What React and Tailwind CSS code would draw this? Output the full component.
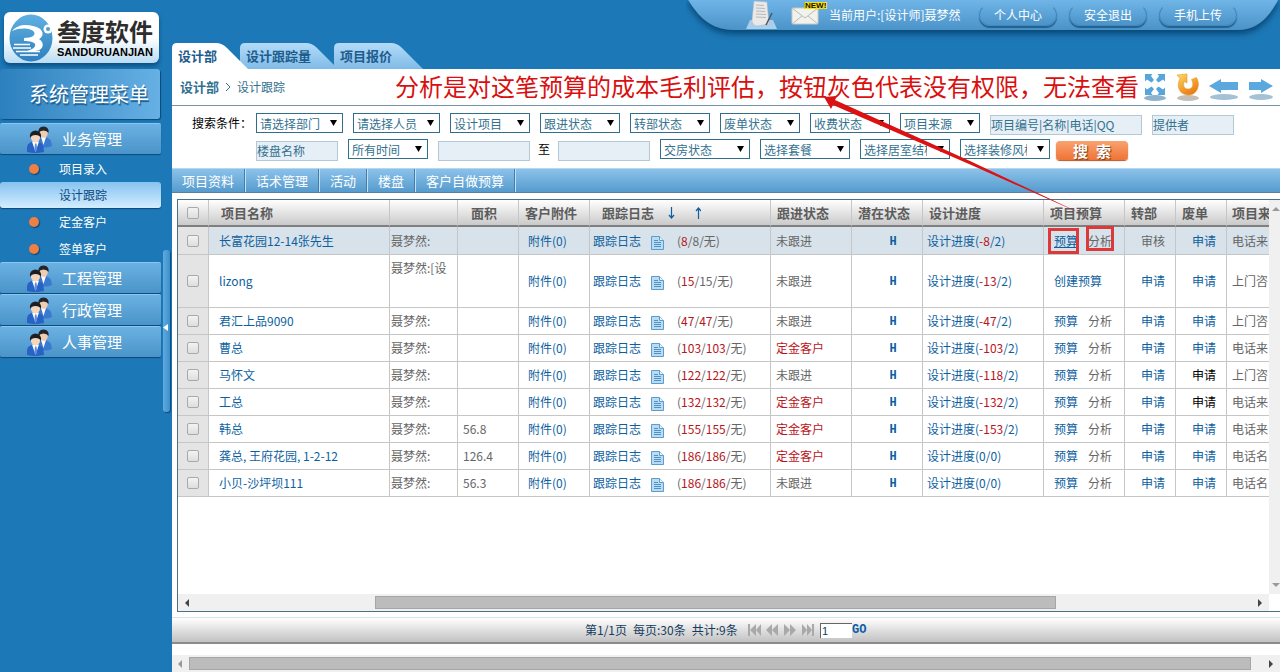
import React, { useState } from "react";

const projetos = [
  { nome: "长富花园12-14张先生", resp: "聂梦然:", area: "", log: ["8", "8"], status: "未跟进", prog: ["-8", "2"], origem: "电话来", atual: true, revisao: true },
  { nome: "lizong", resp: "聂梦然:[设", area: "", log: ["15", "15"], status: "未跟进", prog: ["-13", "2"], origem: "上门咨", novo: true },
  { nome: "君汇上品9090", resp: "聂梦然:", area: "", log: ["47", "47"], logRed: true, status: "未跟进", prog: ["-47", "2"], origem: "上门咨" },
  { nome: "曹总", resp: "聂梦然:", area: "", log: ["103", "103"], logRed: true, status: "定金客户", prog: ["-103", "2"], origem: "电话来" },
  { nome: "马怀文", resp: "聂梦然:", area: "", log: ["122", "122"], logRed: true, status: "未跟进", prog: ["-118", "2"], origem: "上门咨", preto: true },
  { nome: "工总", resp: "聂梦然:", area: "", log: ["132", "132"], logRed: true, status: "定金客户", prog: ["-132", "2"], origem: "电话来", preto: true },
  { nome: "韩总", resp: "聂梦然:", area: "56.8", log: ["155", "155"], logRed: true, status: "定金客户", prog: ["-153", "2"], origem: "电话来" },
  { nome: "龚总, 王府花园, 1-2-12", resp: "聂梦然:", area: "126.4", log: ["186", "186"], logRed: true, status: "定金客户", prog: ["0", "0"], origem: "电话名" },
  { nome: "小贝-沙坪坝111", resp: "聂梦然:", area: "56.3", log: ["186", "186"], logRed: true, status: "未跟进", prog: ["0", "0"], origem: "电话名" },
];

function Logo() {
  return (
    <a
      href="#home"
      className="ml-1 mt-3 flex h-[51px] w-[155px] items-center rounded-md bg-linear-to-b from-white from-50% to-[#b9dcf3] shadow-[0_3px_4px_#0d4f80]"
    >
      <svg className="ml-1 h-[48px] w-[48px] shrink-0" viewBox="0 0 48 48">
        <defs>
          <linearGradient id="globe" x1="0" y1="0" x2="0" y2="1">
            <stop offset="0" stopColor="#5fb0e2" />
            <stop offset="1" stopColor="#2f80bd" />
          </linearGradient>
        </defs>
        <ellipse cx="23" cy="24" rx="21.500" ry="23.500" fill="url(#globe)" />
        <path d="M4 17C9 11 17 10 25 12C36 14 37 22 31 25C37 28 36 37 27 37H19C25 35 28 33 27 30C26 28 22 27 16 27V24C24 24 28 21 26 18C24 14 12 13 4 17Z" fill="#fff" />
        <circle cx="40" cy="15" r="4.500" fill="#fff" />
        <circle cx="40" cy="15" r="2" fill="#4c9fd5" />
        <path d="M6 30.500h16M5 34h18M8 37.500h24M12 41h18" stroke="#fff" strokeWidth="1.300" fill="none" />
      </svg>
      <span className="ml-px flex flex-col gap-px">
        <span className="text-2xl/7 font-bold text-[#2d2d2d]">叁度软件</span>
        <span className="font-['Liberation_Sans',sans-serif] text-[11px]/3 font-bold text-black">SANDURUANJIAN</span>
      </span>
    </a>
  );
}

function UsersIcon() {
  return (
    <svg className="h-[27px] w-[27px]" viewBox="0 0 27 27" aria-hidden="true">
      <path d="M11 20V15Q12 11 17 11Q23 11 25 15L26 20Q20 23 11 20Z" fill="#3b78d0" />
      <path d="M15 11L17.500 19L20 11Z" fill="#fff" />
      <ellipse cx="17.500" cy="7" rx="4.300" ry="5" fill="#f0cdb0" />
      <path d="M12.500 7Q11.500 1 17.500 0.500Q23.500 1 22.500 7Q21 4.500 17.500 4.500Q14 4.500 12.500 7Z" fill="#22252b" />
      <path d="M1 26V21Q2 15.500 9 15.500Q16 15.500 17.500 21L18 26Q9 28 1 26Z" fill="#2763c4" />
      <path d="M6 15.500L9.500 26L13 15.500Z" fill="#fff" />
      <path d="M9 17.500h1.500l.7 6-1.500 2-1.300-2Z" fill="#5a8de0" />
      <ellipse cx="9.500" cy="11.500" rx="4.500" ry="5" fill="#f5d6bd" />
      <path d="M4 12Q3 5 9.500 4.500Q16 5 15 12Q13.500 9 9.500 9Q5.500 9 4 12Z" fill="#1c1f24" />
    </svg>
  );
}

function MenuGroup({ label }) {
  return (
    <button className="mb-px flex h-[31px] w-full items-center rounded-[2px] border-t border-[#8ac6ee] bg-linear-to-b from-[#6bb1e3] to-[#4a94c9] pl-[26px] text-white shadow-[0_1px_1px_#0b4a7a]">
      <UsersIcon />
      <span className="ml-[9px] text-[15px]/5">{label}</span>
    </button>
  );
}

function MenuItem({ label }) {
  return (
    <a href="#item" className="flex h-[27px] items-center pl-[29px] text-xs text-white">
      <span className="mr-5 h-[10px] w-[10px] rounded-full bg-[#ee7f45] shadow-[1px_1px_1px_#0c4672]" />
      {label}
    </a>
  );
}

function Sidebar() {
  return (
    <aside className="flex w-[172px] shrink-0 gap-[2px]">
      <div className="w-[161px]">
        <Logo />
        <h1 className="mb-1 mt-[6px] mr-px flex h-[50px] items-center rounded-[3px] bg-linear-to-r from-[#2b80bd] to-[#66b0e4] pl-[29px] text-xl text-white shadow-[1px_1px_1px_#0b4a7a] text-shadow-[1px_2px_1px_#1a5a8c]">
          系统管理菜单
        </h1>
        <nav>
          <MenuGroup label="业务管理" />
          <MenuItem label="项目录入" />
          <a
            href="#design"
            className="flex h-[26px] items-center rounded-[3px] bg-linear-to-b from-[#86c3ef] to-[#d3edff] pl-[59px] text-xs text-[#0b4a80] shadow-[0_1px_1px_#0b4a7a]"
          >
            设计跟踪
          </a>
          <MenuItem label="定金客户" />
          <MenuItem label="签单客户" />
          <MenuGroup label="工程管理" />
          <MenuGroup label="行政管理" />
          <MenuGroup label="人事管理" />
        </nav>
      </div>
      <button
        aria-label="收起菜单"
        className="mt-[250px] flex h-[162px] w-[7px] items-center rounded-[3px] bg-linear-to-r from-[#5fabe0] to-[#3c8fca] shadow-[1px_1px_1px_#0b4a7a]"
      >
        <svg className="mb-2 h-[7px] w-[5px]" viewBox="0 0 5 7">
          <path d="M5 0V7L0 3.500Z" fill="#fff" />
        </svg>
      </button>
    </aside>
  );
}

function PillButton({ children }) {
  return (
    <button className="h-[22px] w-[78px] rounded-full border border-[#4289bd] border-t-[#6eaedc] bg-linear-to-b from-[#68b0e2] to-[#4b93c8] text-xs text-white shadow-[0_2px_1px_#22608f]">
      {children}
    </button>
  );
}

function UserBar() {
  return (
    <div className="relative ml-auto flex h-[43px] w-[594px] items-start">
      <svg className="absolute inset-0 h-[43px] w-full" viewBox="0 0 594 43" preserveAspectRatio="none">
        <defs>
          <linearGradient id="bar" x1="0" y1="0" x2="0" y2="1">
            <stop offset="0" stopColor="#72b7ea" />
            <stop offset="1" stopColor="#4b93c8" />
          </linearGradient>
          <filter id="barShadow" x="-5%" y="-20%" width="110%" height="170%">
            <feDropShadow dx="0" dy="4" stdDeviation="3" floodColor="#063a63" floodOpacity="0.800" />
          </filter>
        </defs>
        <path d="M1 -2C12 16 24 30 48 30H552C572 30 584 16 593 -2Z" fill="url(#bar)" filter="url(#barShadow)" />
      </svg>
      <div className="relative flex h-[30px] items-center pl-[60px] text-xs text-white">
        <svg className="h-[30px] w-[32px]" viewBox="0 0 32 30">
          <path d="M4 20H27L31 29H0Z" fill="#a9cfea" />
          <path d="M8 1L21 2L23 24L11 26Q6 25 6 20Z" fill="#e9e9e9" stroke="#b5b5b5" strokeWidth="0.500" />
          <path d="M10 5l8 .5M10 8l9 .5M10 11l9 .5M10 14l10 .5M10 17l10 .5" stroke="#b9b9b9" />
          <path d="M26 13L20 25" stroke="#4c5763" strokeWidth="1.500" />
        </svg>
        <svg className="ml-3 h-[30px] w-[40px]" viewBox="0 0 40 30">
          <rect x="2" y="8" width="26" height="16" rx="1" fill="#f1f1ee" stroke="#c9c9c4" />
          <path d="M2 8L15 18L28 8M2 24L12 16M28 24L18 16" fill="none" stroke="#bbbbb5" />
          <text x="15" y="8" fontFamily="Liberation Sans, sans-serif" fontSize="8" fontWeight="700" fill="#111" stroke="#ffe100" strokeWidth="2" paintOrder="stroke">NEW!</text>
        </svg>
        <span className="-ml-px w-[150px] whitespace-nowrap">当前用户:[设计师]聂梦然</span>
        <div className="flex gap-3">
          <PillButton>个人中心</PillButton>
          <PillButton>安全退出</PillButton>
          <PillButton>手机上传</PillButton>
        </div>
      </div>
    </div>
  );
}

function Tab({ label, width, active, className }) {
  return (
    <button className={`relative h-[26px] text-left text-[13px] font-bold text-[#1d5c8c] ${className}`}>
      <svg className="absolute inset-0 h-full w-full" viewBox={`0 0 ${width} 26`} preserveAspectRatio="none">
        <defs>
          <linearGradient id="tabFill" x1="0" y1="0" x2="0" y2="1">
            <stop offset="0" stopColor="#b4dbf8" />
            <stop offset="1" stopColor="#7fbbe8" />
          </linearGradient>
        </defs>
        <path
          d={`M0 26V5Q0 0 5 0H${width - 32}Q${width - 26} 0 ${width - 21} 5L${width} 26Z`}
          fill={active ? "#fff" : "url(#tabFill)"}
        />
      </svg>
      <span className="relative pl-[6px]">{label}</span>
    </button>
  );
}

function NavIcons() {
  return (
    <div className="ml-auto mr-[6px] flex items-center gap-[9px]">
      <button aria-label="全屏">
        <svg className="h-[28px] w-[24px]" viewBox="0 0 24 28">
          <ellipse cx="12" cy="25" rx="11" ry="3" fill="#8fb4c9" />
          <path d="M2 1H9.500L8 3L11 7L8.500 9.500L4 6.500L2 8.500ZM22 1V8.500L20 6.500L15.500 9.500L13 7L16 3L14.500 1ZM2 22V14.500L4 16.500L8.500 13.500L11 16L8 20L9.500 22ZM22 22H14.500L16 20L13 16L15.500 13.500L20 16.500L22 14.500Z" fill="#56a5dc" />
        </svg>
      </button>
      <button aria-label="刷新">
        <svg className="h-[28px] w-[24px]" viewBox="0 0 24 28">
          <defs>
            <linearGradient id="reload" x1="0" y1="0" x2="0.600" y2="1">
              <stop offset="0" stopColor="#fbdc62" />
              <stop offset="1" stopColor="#ec7a14" />
            </linearGradient>
          </defs>
          <ellipse cx="12" cy="25" rx="11" ry="3" fill="#c3bfb8" />
          <path d="M1 2L11 1V10L8.500 8.500C6.500 12 8 16 12 16C17 16 18 11 15.500 6.500L20.500 4.500C25 12 21 22 12.500 22C3 22 0 13 4 5.500Z" fill="url(#reload)" stroke="#e39a2c" strokeWidth="0.600" />
        </svg>
      </button>
      <button aria-label="后退">
        <svg className="h-[28px] w-[30px]" viewBox="0 0 30 28">
          <ellipse cx="15" cy="24" rx="14" ry="3" fill="#a4c2d6" />
          <path d="M0 13L12 6V9H29V17H12V20Z" fill="#5aa8dd" />
        </svg>
      </button>
      <button aria-label="前进">
        <svg className="h-[28px] w-[26px]" viewBox="0 0 26 28">
          <ellipse cx="13" cy="24" rx="12" ry="3" fill="#a4c2d6" />
          <path d="M25 13L13 6V9H1V17H13V20Z" fill="#5aa8dd" />
        </svg>
      </button>
    </div>
  );
}

function Select({ label, className }) {
  return (
    <span className={`relative h-5 ${className}`}>
      <select
        aria-label={label}
        className="block h-5 w-full appearance-none overflow-hidden border border-[#2f6f8c] bg-white pl-[3px] pr-[22px] pt-px text-xs/4 text-[#33718f]"
      >
        <option>{label}</option>
      </select>
      <svg className="pointer-events-none absolute right-[6px] top-[7px] h-[6px] w-[7px]" viewBox="0 0 7 6">
        <path d="M0 0H7L3.500 6Z" fill="#000" />
      </svg>
    </span>
  );
}

function TextBox({ label, value = "", className }) {
  return (
    <input
      type="text"
      aria-label={label}
      defaultValue={value}
      className={`mt-[2px] h-5 border border-[#b3cad6] bg-[#e6eff5] pb-[2px] text-xs text-[#33718f] ${className}`}
    />
  );
}

function Search() {
  return (
    <form className="flex h-[62px] items-start overflow-hidden pt-[7px] whitespace-nowrap text-xs" onSubmit={(e) => e.preventDefault()}>
      <span className="w-[84px] shrink-0 pl-5 text-xs/5 text-black">搜索条件：</span>
      <div className="flex flex-col gap-1">
        <div className="flex gap-[10px]">
          <Select label="请选择部门" className="w-[87px]" />
          <Select label="请选择人员" className="w-[87px]" />
          <Select label="设计项目" className="w-20" />
          <Select label="跟进状态" className="w-20" />
          <Select label="转部状态" className="w-20" />
          <Select label="废单状态" className="w-20" />
          <Select label="收费状态" className="w-20" />
          <Select label="项目来源" className="w-20" />
          <TextBox label="关键字" value="项目编号|名称|电话|QQ" className="w-[152px]" />
          <TextBox label="提供者" value="提供者" className="w-[82px]" />
        </div>
        <div className="flex gap-[10px]">
          <TextBox label="楼盘名称" value="楼盘名称" className="w-[82px]" />
          <Select label="所有时间" className="w-20" />
          <div className="flex gap-2">
            <TextBox label="开始时间" className="w-[92px]" />
            <span className="w-3 text-xs/5 text-black">至</span>
            <TextBox label="结束时间" className="w-[92px]" />
          </div>
          <Select label="交房状态" className="w-[90px]" />
          <Select label="选择套餐" className="w-[90px]" />
          <Select label="选择居室结构" className="w-[90px]" />
          <Select label="选择装修风格" className="w-[90px]" />
          <button className="-ml-1 mt-[2px] flex h-[19px] w-[72px] items-center justify-center gap-2 rounded bg-linear-to-b from-[#f9a26f] to-[#ee7434] text-[15px]/4 font-bold text-white shadow-[0_1px_1px_#b5572a] text-shadow-[1px_1px_1px_#7a3510]">
            <span>搜</span>
            <span>索</span>
          </button>
        </div>
      </div>
    </form>
  );
}

function Toolbar() {
  const itens = ["项目资料", "话术管理", "活动", "楼盘", "客户自做预算"];
  return (
    <div className="flex h-[25px] border-t border-b border-t-[#b5d7ef] border-b-[#5d7f99] bg-linear-to-b from-[#8bc2ea] to-[#559bcd]">
      {itens.map((item) => (
        <button key={item} className="border-r border-[#c4e0f3] pl-[10px] pr-[11px] text-[13px]/5 text-white shadow-[inset_-1px_0_0_#3f7eae]">
          {item}
        </button>
      ))}
    </div>
  );
}

function LogIcon() {
  return (
    <svg className="ml-[10px] mt-1 h-[14px] w-[13px]" viewBox="0 0 13 14" aria-hidden="true">
      <path d="M.5 .5H8.500L12.500 4.500V13.500H.5Z" fill="#b7dcf5" stroke="#5d9ccc" />
      <path d="M8.500 .5V4.500H12.500" fill="#e8f5fd" stroke="#5d9ccc" />
      <path d="M3 4.500h4M3 6.500h7M3 8.500h7M3 10.500h7" stroke="#5590bd" />
    </svg>
  );
}

function Th({ children, className = "pl-[6px]" }) {
  return (
    <th className={`h-[27px] overflow-hidden border-r border-b-2 border-r-[#c6c6c6] border-b-[#7f7f7f] p-0 text-left text-[13px]/5 font-bold text-[#5c5c5c] ${className}`}>
      {children}
    </th>
  );
}

function Td({ children, className = "" }) {
  return <td className={`overflow-hidden border-r border-b border-[#c6c6c6] p-0 ${className}`}>{children}</td>;
}

const linkCls = "text-[#0d5f9f]";

function Check({ label }) {
  return (
    <input
      type="checkbox"
      aria-label={label}
      className="mx-auto block h-3 w-3 appearance-none rounded-[2px] border border-[#a9a9a9] bg-linear-to-b from-[#f3f3f3] to-[#dedede]"
    />
  );
}

function ProjetoRow({ p }) {
  const red = "text-[#b8141b]";
  return (
    <tr className={`${p.novo ? "h-[53px]" : p.atual ? "h-[28px]" : "h-[27px]"} ${p.atual ? "bg-[#d7e2ea]" : "bg-white"}`}>
      <Td className="bg-[#e4e4e4]"><Check label={p.nome} /></Td>
      <Td className="pl-[10px]"><a href="#p" className={linkCls}>{p.nome}</a></Td>
      <Td className={`pl-px ${p.novo ? "pt-[5px] align-top" : ""}`}>{p.resp}</Td>
      <Td className="pl-[5px]">{p.area}</Td>
      <Td className="pl-[9px]"><a href="#f" className={linkCls}>附件(0)</a></Td>
      <Td className="pl-[3px]">
        <div className="flex items-center">
          <a href="#l" className={linkCls}>跟踪日志</a>
          <LogIcon />
          <span className="ml-[13px]">
            (<span className={red}>{p.log[0]}</span>/<span className={p.logRed ? red : ""}>{p.log[1]}</span>/无)
          </span>
        </div>
      </Td>
      <Td className={`pl-[5px] ${p.status === "定金客户" ? red : ""}`}>{p.status}</Td>
      <Td className="pl-3 text-center"><span className={`font-['Liberation_Mono',monospace] text-xs font-bold ${linkCls}`}>H</span></Td>
      <Td className="pl-1">
        <a href="#d" className={linkCls}>
          设计进度(<span className={p.prog[0] === "0" ? "" : red}>{p.prog[0]}</span>/{p.prog[1]})
        </a>
      </Td>
      <Td className="pl-[10px]">
        {p.novo ? (
          <a href="#b" className={linkCls}>创建预算</a>
        ) : (
          <div className="flex gap-[10px]">
            <a href="#b" className={`${linkCls} ${p.atual ? "underline" : ""}`}>预算</a>
            <span>分析</span>
          </div>
        )}
      </Td>
      <Td className="pl-4">{p.revisao ? "审核" : <a href="#t" className={linkCls}>申请</a>}</Td>
      <Td className="pl-4"><a href="#w" className={p.preto ? "text-black" : linkCls}>申请</a></Td>
      <Td className="pl-[5px]">{p.origem}</Td>
    </tr>
  );
}

function ProjetoTable() {
  return (
    <table className="w-[1130px] table-fixed border-separate border-spacing-0 whitespace-nowrap text-xs/4 text-[#666]">
      <colgroup>
        <col className="w-[31px]" />
        <col className="w-[181px]" />
        <col className="w-[68px]" />
        <col className="w-[61px]" />
        <col className="w-[71px]" />
        <col className="w-[181px]" />
        <col className="w-[81px]" />
        <col className="w-[71px]" />
        <col className="w-[121px]" />
        <col className="w-[81px]" />
        <col className="w-[51px]" />
        <col className="w-[51px]" />
        <col className="w-[81px]" />
      </colgroup>
      <thead>
        <tr className="bg-linear-to-b from-white to-[#c6c6c6]">
          <Th className=""><Check label="全选" /></Th>
          <Th className="pl-3">项目名称</Th>
          <Th />
          <Th className="pl-[13px]">面积</Th>
          <Th>客户附件</Th>
          <Th className="pl-3">
            <div className="flex items-center">
              跟踪日志
              <svg className="ml-3 h-3 w-[35px]" viewBox="0 0 35 12" fill="none" stroke="#0d5f9f" strokeWidth="1.200">
                <path d="M5.500 0V11M3 8L5.500 11L8 8M32.500 12V1M30 4L32.500 1L35 4" />
              </svg>
            </div>
          </Th>
          <Th>跟进状态</Th>
          <Th>潜在状态</Th>
          <Th>设计进度</Th>
          <Th>项目预算</Th>
          <Th>转部</Th>
          <Th>废单</Th>
          <Th className="pl-[5px]">项目来</Th>
        </tr>
      </thead>
      <tbody>
        {projetos.map((p) => (
          <ProjetoRow key={p.nome} p={p} />
        ))}
      </tbody>
    </table>
  );
}

function Arrow({ dir, color = "#444" }) {
  const paths = { left: "M6 0V8L2 4Z", right: "M2 0V8L6 4Z", up: "M0 6H8L4 2Z", down: "M0 2H8L4 6Z" };
  return (
    <svg className="h-2 w-2 shrink-0" viewBox="0 0 8 8">
      <path d={paths[dir]} fill={color} />
    </svg>
  );
}

function Pager() {
  const [pagina, setPagina] = useState("1");
  return (
    <div className="mt-[5px] flex h-[27px] items-center border-t border-b-2 border-t-[#dbe3ea] border-b-[#8b8b8b] bg-linear-to-b from-white to-[#c2c2c2] pl-[413px] text-xs text-[#143c5e]">
      <div className="flex w-[163px] gap-[6px] whitespace-nowrap">
        <span>第1/1页</span>
        <span>每页:30条</span>
        <span>共计:9条</span>
      </div>
      <svg className="h-3 w-[66px]" viewBox="0 0 66 12" fill="#a9a9a9">
        <path d="M0 0h2v12H0zM8 0v12L2 6zM13 0v12L8 6zM24 0v12L18 6zM30 0v12L24 6zM36 0v12l6-6zM42 0v12l6-6zM54 0v12l5-6zM59 0v12l5-6zM64 0h2v12h-2z" />
      </svg>
      <input
        aria-label="页码"
        value={pagina}
        onChange={(e) => setPagina(e.target.value)}
        className="ml-[6px] h-[15px] w-8 border-t border-l border-[#666] bg-white pl-px font-['Liberation_Sans',sans-serif] text-[11px] text-[#143c5e]"
      />
      <button className="font-['Liberation_Mono',monospace] text-xs font-bold text-[#0b5ea5]">GO</button>
    </div>
  );
}

// red notes drawn on top of the page
function Notes() {
  return (
    <>
      <p className="pointer-events-none absolute left-[395px] top-[70px] text-2xl/8 whitespace-nowrap text-[#d8100f]">
        分析是对这笔预算的成本毛利评估，按钮灰色代表没有权限，无法查看
      </p>
      <svg className="pointer-events-none absolute left-[820px] top-[90px] h-[170px] w-[300px]" viewBox="0 0 300 170">
        <path d="M4 7L17 6L15 10L150 71L262 124L149 74L13 15L11 19Z" fill="#dc1212" />
        <rect x="229.500" y="139.500" width="28" height="23" fill="none" stroke="#dc3a3a" strokeWidth="3" />
        <rect x="267.500" y="137.500" width="25" height="22" fill="none" stroke="#dc3a3a" strokeWidth="3" />
      </svg>
    </>
  );
}

export default function App() {
  return (
    <div className="relative flex min-h-screen overflow-hidden bg-[#1c78b6] font-['Noto_Sans_CJK_SC',sans-serif]">
      <Sidebar />
      <main className="flex min-w-0 flex-1 flex-col">
        <UserBar />
        <div className="flex">
          <Tab label="设计部" width={76} active className="z-20 -mr-2 w-[76px]" />
          <Tab label="设计跟踪量" width={98} className="z-10 -mr-1 w-[98px]" />
          <Tab label="项目报价" width={89} className="w-[89px]" />
        </div>
        <div className="flex flex-1 flex-col bg-white">
          <div className="flex h-[37px] items-center border-b border-[#7394ab] pl-2 text-[#33718f]">
            <strong className="text-[13px]">设计部</strong>
            <svg className="mx-[6px] h-2 w-[6px]" viewBox="0 0 6 8" fill="none" stroke="#33718f">
              <path d="M1 0L5 4L1 8" />
            </svg>
            <span className="text-xs">设计跟踪</span>
            <NavIcons />
          </div>
          <Search />
          <Toolbar />
          <div className="ml-[5px] mt-[6px] flex flex-1 flex-col border border-r-0 border-[#4d6f88]">
            <div className="flex flex-1">
              <div className="min-w-0 flex-1 overflow-hidden">
                <ProjetoTable />
              </div>
              <div className="flex w-[11px] flex-col items-end justify-between bg-[#f0f0f0] py-[5px]">
                <Arrow dir="up" color="#999" />
                <Arrow dir="down" color="#999" />
              </div>
            </div>
            <div className="mr-[11px] flex h-[17px] items-center justify-between bg-[#f0f0f0] px-[5px]">
              <Arrow dir="left" />
              <div className="ml-[17%] mr-auto h-[13px] w-[63%] border border-[#a6a6a6] bg-[#bcbcbc]" />
              <Arrow dir="right" />
            </div>
          </div>
          <Pager />
          <div className="mt-[11px] flex h-[17px] items-center gap-[5px] bg-[#f0f0f0] pl-1 pr-[5px]">
            <Arrow dir="left" color="#999" />
            <div className="mr-[11px] h-[13px] flex-1 border border-[#a6a6a6] bg-[#bcbcbc]" />
            <Arrow dir="right" />
          </div>
        </div>
      </main>
      <Notes />
    </div>
  );
}
